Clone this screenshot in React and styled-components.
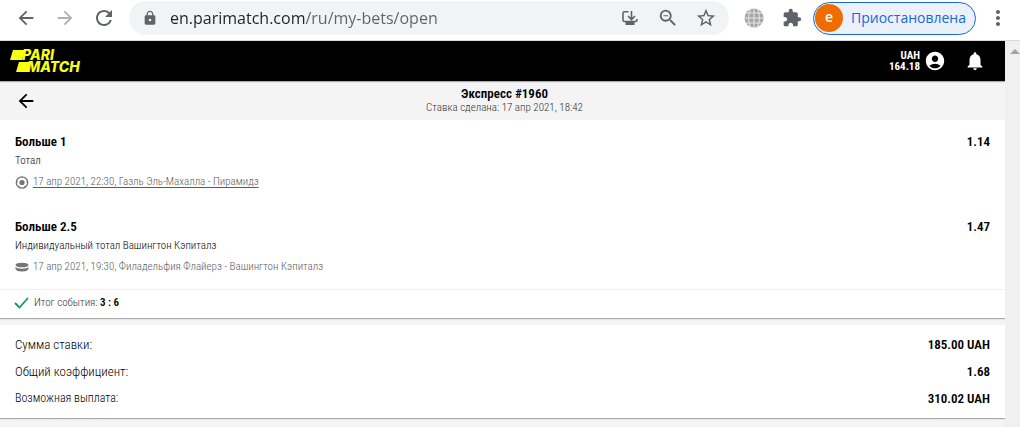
import React from "react"
import styled, { createGlobalStyle } from "styled-components"
import {
  MdArrowBack,
  MdArrowForward,
  MdRefresh,
  MdLock,
  MdStarBorder,
  MdExtension,
  MdMoreVert,
  MdAccountCircle,
  MdNotifications,
  MdZoomOut,
} from "react-icons/md"

const GlobalStyle = createGlobalStyle`
  :root {
    --gutter: 15px;
    --grey: #5f6368;
    --muted: #5c5c5c;
    --page: #f4f4f4;
    --condensed: "Roboto Condensed", "Liberation Sans Narrow", Roboto, sans-serif;
    --system: "Open Sans", "Noto Sans", sans-serif;
  }

  * {
    box-sizing: border-box;
  }

  body {
    margin: 0;
    background: var(--page);
    font-family: var(--condensed);
    font-weight: 300;
    color: #000;
  }

  h1, h2, p, dl, dd {
    margin: 0;
  }

  button {
    display: flex;
    align-items: center;
    justify-content: center;
    padding: 0;
    border: 0;
    background: none;
    font: inherit;
    color: inherit;
    cursor: pointer;
  }

  svg {
    display: block;
    flex: none;
  }
`

const Window = styled.div`
  display: flex;
  flex-direction: column;
  min-height: 100vh;
`

const Toolbar = styled.div`
  display: flex;
  align-items: center;
  height: 41px;
  padding: 0 10px 4px 14px;
  background: #fff;
  border-bottom: 1px solid #d9dadc;
  font-family: var(--system);
  font-weight: 400;
  color: var(--grey);
`

const NavButtons = styled.div`
  display: flex;
  gap: 15px;
  margin-right: 13px;
`

const ToolButton = styled.button`
  width: 24px;
  height: 24px;
  opacity: ${({ $faded }) => ($faded ? 0.5 : 1)};
`

const AddressBar = styled.div`
  flex: 1;
  display: flex;
  align-items: center;
  gap: 12px;
  height: 34px;
  margin-right: 13px;
  padding: 0 11px 0 13px;
  border-radius: 17px;
  background: #f1f3f4;
`

/* the host is dark, the path after it is grey */
const Address = styled.input`
  flex: 1;
  min-width: 0;
  padding: 0;
  border: 0;
  outline: 0;
  background: linear-gradient(90deg, #202124 135px, var(--grey) 135px);
  background-clip: text;
  font: 16px/24px var(--system);
  color: transparent;
  caret-color: #202124;
`

const ToolGroup = styled.div`
  display: flex;
  gap: 14px;
`

const Extensions = styled(ToolGroup)`
  margin-right: 9px;
`

const Profile = styled.button`
  && {
    justify-content: flex-start;
    gap: 8px;
    height: 33px;
    margin-right: 10px;
    padding: 0 9px 0 1px;
    border: 1px solid #1967d2;
    border-radius: 17px;
    background: #ebf1fb;
    font-size: 14px;
    line-height: 20px;
    color: #1967d2;
  }
`

const Avatar = styled.span`
  width: 28px;
  height: 28px;
  border-radius: 50%;
  background: #ef6c00;
  font-weight: 600;
  line-height: 26px;
  color: #fff;
`

const Viewport = styled.div`
  flex: 1;
  display: flex;
`

const Page = styled.div`
  flex: 1;
`

const ScrollTrack = styled.div`
  width: 15px;
  padding: 8px 0 0 5px;
  background: #f0f0f0;
`

const Header = styled.header`
  display: flex;
  align-items: center;
  height: 40px;
  padding: 0 19px 0 9px;
  background: #000;
  box-shadow: 0 1px 1px rgba(0, 0, 0, 0.3);
  color: #fff;
`

const LogoLink = styled.a`
  margin-right: auto;

  svg {
    overflow: visible;
  }
`

const Balance = styled.div`
  margin-right: 4px;
  font-size: 11px;
  font-weight: 700;
  line-height: 11px;
  text-align: right;
`

const HeaderButton = styled.button`
  margin-left: ${({ $spaced }) => ($spaced ? "18px" : "0")};
`

const TitleBar = styled.div`
  display: grid;
  grid-template-columns: 24px 1fr 24px;
  align-items: center;
  height: 39px;
  padding: 0 10px 0 14px;
  text-align: center;
`

const Title = styled.h1`
  font-size: 13px;
  font-weight: 600;
  line-height: 14px;
`

const Subtitle = styled.p`
  font-size: 11px;
  line-height: 14px;
  color: #333;
`

const Card = styled.section`
  margin-bottom: 7px;
  background: #fff;
  box-shadow: 0 1px 1px rgba(0, 0, 0, 0.3);
`

const Bets = styled.div`
  display: grid;
  gap: 1px;
`

const Bet = styled.article`
  height: 84px;
  padding: 14px var(--gutter) 0;
`

const BetHead = styled.div`
  display: flex;
  justify-content: space-between;
  font-size: 13px;
  font-weight: 600;
  line-height: 16px;
`

const Outcome = styled.h2`
  font-size: inherit;
  font-weight: inherit;
`

const Market = styled.p`
  margin-top: 4px;
  font-size: 11px;
  line-height: 14px;
`

const Event = styled.div`
  display: flex;
  align-items: center;
  gap: 4px;
  margin-top: 6px;
  font-size: 11px;
  line-height: 16px;
  color: var(--muted);

  a {
    color: inherit;
    text-underline-offset: 2px;
  }
`

const Result = styled.div`
  display: flex;
  align-items: center;
  gap: 5px;
  height: 29px;
  padding: 0 var(--gutter) 3px 14px;
  border-top: 1px solid #f0f0f0;
  font-size: 11px;
  color: #333;

  b {
    font-weight: 600;
    color: #000;
  }
`

const Totals = styled.dl`
  padding: 6px var(--gutter);
`

const Total = styled.div`
  display: flex;
  justify-content: space-between;
  font-size: 13px;
  line-height: 27px;

  dt {
    font-size: ${({ $small }) => ($small ? "12px" : "13px")};
  }

  dd {
    font-weight: 600;
  }
`

const Logo = () => (
  <svg width="72" height="24" viewBox="0 0 72 24" aria-label="Parimatch">
    <path d="M4 1h12l-3 10H1z M10 13h12l-3 10H7z" fill="#f8ff13" />
    <g
      fill="#f8ff13"
      fontFamily="Inter, sans-serif"
      fontWeight="800"
      fontStyle="italic"
      fontSize="14"
    >
      <text x="13" y="11">PARI</text>
      <text x="18" y="23">MATCH</text>
    </g>
  </svg>
)

const InstallIcon = () => (
  <svg width="18" height="18" viewBox="0 0 18 18" fill="none" stroke="currentColor">
    <path
      d="M7.500 2.800H3.500Q2 2.800 2 4.300V11q0 1.500 1.500 1.500h11Q16 12.500 16 11v-1M10.500 2v8M7 7l3.500 3.500L14 7"
      strokeWidth="1.600"
    />
    <path d="M4.500 14.500h9" strokeWidth="3" />
  </svg>
)

const GlobeIcon = () => (
  <svg width="20" height="20" viewBox="0 0 20 20" fill="none">
    <circle cx="10" cy="10" r="9.500" fill="#a6a6a6" />
    <path
      d="M10 0v20M0 10h20M2 5h16M2 15h16M7 0Q2 10 7 20M13 0q5 10 0 20"
      stroke="#e8e8e8"
    />
  </svg>
)

const FootballIcon = () => (
  <svg width="14" height="13" viewBox="0 0 13 13" fill="none" stroke="#757575">
    <circle cx="6.500" cy="6.500" r="5.700" strokeWidth="1.300" />
    <circle cx="6.500" cy="6.500" r="2.600" fill="#757575" stroke="none" />
    <path d="M6.500 1v1.300M1 5.500l1.300.5M12 5.500l-1.300.5M3.200 11l.8-1.200M9.800 11L9 9.800" />
  </svg>
)

const PuckIcon = () => (
  <svg width="14" height="10" viewBox="0 0 14 10" fill="#757575">
    <ellipse cx="7" cy="3" rx="6.500" ry="2.300" />
    <path d="M.5 5Q2 6.700 7 6.700T13.500 5v2q-1 2.500-6.500 2.500T.5 7z" />
  </svg>
)

const CheckIcon = () => (
  <svg width="15" height="12" viewBox="0 0 15 12" fill="none">
    <path d="M1 6l4.500 4.500L14 1" stroke="#0f9d58" strokeWidth="1.800" />
  </svg>
)

const bets = [
  {
    outcome: "Больше 1",
    odds: "1.14",
    market: "Тотал",
    Icon: FootballIcon,
    event: "17 апр 2021, 22:30, Газль Эль-Махалла - Пирамидз",
    linked: true,
  },
  {
    outcome: "Больше 2.5",
    odds: "1.47",
    market: "Индивидуальный тотал Вашингтон Кэпиталз",
    Icon: PuckIcon,
    event: "17 апр 2021, 19:30, Филадельфия Флайерз - Вашингтон Кэпиталз",
  },
]

const totals = [
  { label: "Сумма ставки:", value: "185.00 UAH" },
  { label: "Общий коэффициент:", value: "1.68" },
  { label: "Возможная выплата:", value: "310.02 UAH", small: true },
]

const BrowserToolbar = () => (
  <Toolbar>
    <NavButtons>
      <ToolButton aria-label="Назад">
        <MdArrowBack size={22} />
      </ToolButton>
      <ToolButton aria-label="Вперёд" $faded>
        <MdArrowForward size={22} />
      </ToolButton>
      <ToolButton aria-label="Обновить">
        <MdRefresh size={24} />
      </ToolButton>
    </NavButtons>
    <AddressBar>
      <MdLock size={16} />
      <Address aria-label="Адрес" defaultValue="en.parimatch.com/ru/my-bets/open" />
      <ToolGroup>
        <ToolButton aria-label="Установить">
          <InstallIcon />
        </ToolButton>
        <ToolButton aria-label="Масштаб">
          <MdZoomOut size={22} />
        </ToolButton>
        <ToolButton aria-label="В закладки">
          <MdStarBorder size={22} />
        </ToolButton>
      </ToolGroup>
    </AddressBar>
    <Extensions>
      <ToolButton aria-label="Перевод">
        <GlobeIcon />
      </ToolButton>
      <ToolButton aria-label="Расширения">
        <MdExtension size={20} />
      </ToolButton>
    </Extensions>
    <Profile>
      <Avatar>e</Avatar>
      Приостановлена
    </Profile>
    <ToolButton aria-label="Меню">
      <MdMoreVert size={24} />
    </ToolButton>
  </Toolbar>
)

const App = () => {
  return (
    <Window>
      <GlobalStyle />
      <BrowserToolbar />
      <Viewport>
        <Page>
          <Header>
            <LogoLink href="#">
              <Logo />
            </LogoLink>
            <Balance>
              UAH
              <br />
              164.18
            </Balance>
            <HeaderButton aria-label="Профиль">
              <MdAccountCircle size={22} />
            </HeaderButton>
            <HeaderButton aria-label="Уведомления" $spaced>
              <MdNotifications size={22} />
            </HeaderButton>
          </Header>
          <TitleBar>
            <ToolButton aria-label="К списку ставок">
              <MdArrowBack size={22} />
            </ToolButton>
            <div>
              <Title>Экспресс #1960</Title>
              <Subtitle>Ставка сделана: 17 апр 2021, 18:42</Subtitle>
            </div>
          </TitleBar>
          <Card>
            <Bets>
              {bets.map(({ outcome, odds, market, Icon, event, linked }) => (
                <Bet key={outcome}>
                  <BetHead>
                    <Outcome>{outcome}</Outcome>
                    <span>{odds}</span>
                  </BetHead>
                  <Market>{market}</Market>
                  <Event>
                    <Icon />
                    {linked ? <a href="#">{event}</a> : <span>{event}</span>}
                  </Event>
                </Bet>
              ))}
            </Bets>
            <Result>
              <CheckIcon />
              <span>
                Итог события: <b>3 : 6</b>
              </span>
            </Result>
          </Card>
          <Card>
            <Totals>
              {totals.map(({ label, value, small }) => (
                <Total key={label} $small={small}>
                  <dt>{label}</dt>
                  <dd>{value}</dd>
                </Total>
              ))}
            </Totals>
          </Card>
        </Page>
        <ScrollTrack>
          <svg width="10" height="5" viewBox="0 0 10 5">
            <path d="M0 5l5-5 5 5z" fill="#a3a3a3" />
          </svg>
        </ScrollTrack>
      </Viewport>
    </Window>
  )
}

export default App
